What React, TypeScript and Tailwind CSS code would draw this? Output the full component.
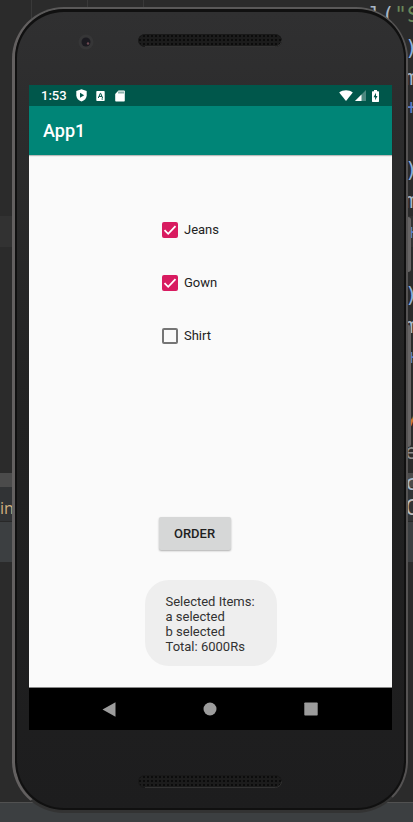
import React, { useState } from "react";

const codeRows = [
  { text: ")", height: "h-[30px]", color: "text-[#8fb0dc]" },
  { text: "m", height: "h-[29px]", color: "text-[#a9b7c6]" },
  { text: "+", height: "h-[63px]", color: "text-[#5a7fc8]" },
  { text: ")", height: "h-[31px]", color: "text-[#8fb0dc]" },
  { text: "m", height: "h-[31px]", color: "text-[#a9b7c6]" },
  { text: "+", height: "h-[63px]", color: "text-[#5a7fc8]" },
  { text: ")", height: "h-[31px]", color: "text-[#8fb0dc]" },
  { text: "m", height: "h-[31px]", color: "text-[#a9b7c6]" },
  { text: "+", height: "h-[59px]", color: "text-[#5a7fc8]" },
  { text: "y", height: "h-[36px]", color: "text-[#cc7832]" },
  { text: "e", height: "h-[31px]", color: "text-[#8c8c8c]" },
  { text: "c", height: "h-[25px]", color: "text-[#a9b7c6]" },
  { text: "C", height: "h-[24px]", color: "text-[#bbbbbb]" },
];

const Editor = () => {
  return (
    <div className="absolute inset-0 -z-10 flex flex-col overflow-hidden bg-[#2b2b2b]">
      {/* PANES */}
      <div className="h-[216px] shrink-0 flex">
        <div className="w-8 h-5 border-r border-[#393939]"></div>
        <div className="w-14 h-2 border-r border-[#393939]"></div>
        <div className="w-14 h-2 border-r border-[#393939]"></div>
      </div>
      <div className="h-[31px] shrink-0 bg-[#323232]"></div>
      <div className="h-[226px] shrink-0"></div>
      <div className="h-[14px] shrink-0 bg-[#4b4b4b]"></div>
      <div className="h-[35px] shrink-0 flex items-center pt-2 bg-[#313335] border-b border-[#282828]">
        <span className="font-['Open_Sans',sans-serif] text-base leading-5 text-[#d0b080]">
          in
        </span>
      </div>
      <div className="h-10 shrink-0 bg-[#3c3f41]"></div>
      <div className="flex-1"></div>
      <div className="h-5 shrink-0 bg-[#3c3f41] border-t border-[#515151]"></div>

      {/* CODE */}
      <div className="absolute top-0 right-0 w-[60px] pt-[3px] font-['DejaVu_Sans_Mono',monospace] text-[21px] leading-6">
        <p className="flex h-[33px] pl-4 whitespace-pre text-[#a9b7c6]">
          l(<span className="text-[#6a8759]">"S</span>
        </p>
        {codeRows.map((row, i) => (
          <p key={i} className={`flex pl-[52px] ${row.height} ${row.color}`}>
            {row.text}
          </p>
        ))}
      </div>
    </div>
  );
};

const Speaker = () => {
  return (
    <svg width="144" height="13" viewBox="0 0 144 13" aria-hidden="true">
      <defs>
        <pattern id="mesh" width="4" height="4" patternUnits="userSpaceOnUse">
          <rect width="4" height="4" fill="#1c1c1c" />
          <circle cx="2" cy="2" r="1" fill="#060606" />
        </pattern>
      </defs>
      <rect x="0.5" y="0.5" width="143" height="12" rx="6" fill="url(#mesh)" stroke="#191919" />
      <path d="M7 12.5h130.500a6 6 0 0 0 6-6" fill="none" stroke="#333333" />
    </svg>
  );
};

const StatusBar = () => {
  return (
    <div className="h-[21px] flex items-center justify-between pl-3 pr-[13px] bg-[#00574b] text-white">
      <div className="flex items-center">
        <span className="w-[35px] text-[13px] leading-5 font-medium">1:53</span>
        <svg width="11" height="13" viewBox="0 0 11 13" aria-hidden="true">
          <path d="M5.500 0.300L10.700 2v4.300c0 3-2.200 5.300-5.200 6.300C2.500 11.600.3 9.300.3 6.300V2z" fill="#fff" />
          <path d="M4 3.800l4.200 2.500L4 8.800z" fill="#00574b" />
        </svg>
        <svg className="ml-[9px]" width="9" height="10" viewBox="0 0 9 10" aria-hidden="true">
          <rect x="0.300" width="8.400" height="10" rx="0.800" fill="#fff" />
          <path d="M2.300 7L4.300 2.300h.4L6.600 7M3 5.400h3M5.500 8h1.500" fill="none" stroke="#00574b" />
        </svg>
        <svg className="ml-[10px]" width="10" height="12" viewBox="0 0 10 12" aria-hidden="true">
          <path d="M3.500.5H9q.8 0 .8.800v9.400q0 .8-.8.800H1q-.8 0-.8-.8V4z" fill="#fff" />
          <path d="M4 1.500v2M6 1.500v2M8 1.500v2" stroke="#00574b" strokeWidth="0.900" />
        </svg>
      </div>
      <div className="flex items-center">
        <svg width="14" height="11" viewBox="0 0 14 11" aria-hidden="true">
          <path d="M7 11L.2 2.500C4-.6 10-.6 13.800 2.500z" fill="#fff" />
        </svg>
        <svg className="ml-[2px]" width="11" height="11" viewBox="0 0 11 11" aria-hidden="true">
          <path d="M0 11L11 0v11z" fill="#fff" opacity="0.300" />
          <path d="M0 11L6.500 4.500V11z" fill="#fff" />
        </svg>
        <svg className="ml-[6px]" width="7" height="12" viewBox="0 0 7 12" aria-hidden="true">
          <path d="M2 0h3v1.300h1.400q.6 0 .6.700v9.300q0 .7-.6.700H.6q-.6 0-.6-.7V2q0-.7.600-.7H2z" fill="#fff" />
          <path d="M4 2.700v3.200h1.500L3.100 10.300V7.200H1.500z" fill="#00574b" />
        </svg>
      </div>
    </div>
  );
};

type ItemProps = {
  name: string;
  checked: boolean;
  onChange: () => void;
};

const Item = ({ name, checked, onChange }: ItemProps) => {
  return (
    <label className="h-[53px] flex items-center gap-[6px] text-[13px] leading-4 text-[#222222] cursor-pointer">
      <span className="grid">
        <input
          type="checkbox"
          checked={checked}
          onChange={onChange}
          className="peer col-start-1 row-start-1 appearance-none w-4 h-4 rounded-[2px] border-2 border-[#757575] checked:border-[#d81b60] checked:bg-[#d81b60]"
        />
        <svg
          className="col-start-1 row-start-1 pointer-events-none invisible peer-checked:visible"
          width="16"
          height="16"
          viewBox="0 0 16 16"
          aria-hidden="true"
        >
          <path d="M2.500 8.200l3.700 3.600 7.300-7.600" fill="none" stroke="#fff" strokeWidth="1.800" />
        </svg>
      </span>
      {name}
    </label>
  );
};

const App = () => {
  const [items, setItems] = useState([
    { name: "Jeans", checked: true },
    { name: "Gown", checked: true },
    { name: "Shirt", checked: false },
  ]);

  const toggle = (name: string) => {
    setItems((prev) =>
      prev.map((item) =>
        item.name === name ? { ...item, checked: !item.checked } : item
      )
    );
  };

  return (
    <div className="relative isolate min-h-screen flex pt-[7px] pb-[9px] pl-3 pr-[2px] font-[Roboto,sans-serif]">
      <Editor />

      {/* PHONE */}
      <div className="flex-1 flex rounded-[52px] border-t-2 border-r-2 border-b-2 border-l-3 border-t-[#5a5959] border-r-[#555353] border-b-[#333333] border-l-[#636060] bg-[#333333] pb-px">
        <div className="flex-1 flex flex-col items-stretch rounded-[49px] border-2 border-t-3 border-[#101010] bg-linear-to-b from-[#303031] via-[#222222] to-[#1d1d1e] pl-3 pr-3">
          <div className="h-[73px] grid grid-cols-[1fr_auto_1fr] pt-[22px] pr-[2px] items-start">
            <svg className="ml-[49px]" width="16" height="16" viewBox="0 0 16 16" aria-hidden="true">
              <circle cx="8" cy="8" r="7.500" fill="#363637" />
              <circle cx="8" cy="8" r="4.500" fill="#1b1a20" />
              <circle cx="10" cy="9.500" r="1.200" fill="#6e4a52" />
            </svg>
            <Speaker />
          </div>

          {/* SCREEN */}
          <div className="flex-1 flex flex-col bg-[#fafafa]">
            <StatusBar />
            <header className="h-[49px] flex items-center px-[14px] bg-[#008577] text-white shadow-[0_1px_1px_rgba(0,0,0,0.25)]">
              <h1 className="text-[18px] leading-6 font-medium">App1</h1>
            </header>

            <main className="flex-1 flex flex-col items-center pt-12">
              <div className="flex flex-col pr-10">
                {items.map((item) => (
                  <Item
                    key={item.name}
                    name={item.name}
                    checked={item.checked}
                    onChange={() => toggle(item.name)}
                  />
                ))}
              </div>
              <div className="flex-1"></div>
              <div className="pr-8">
                <button className="w-[72px] h-[33px] rounded-[2px] bg-[#d6d7d7] text-[13px] leading-4 font-medium text-[#1f1f1f] shadow-[0_1px_2px_rgba(0,0,0,0.3)] cursor-pointer">
                  ORDER
                </button>
              </div>
              <div
                role="status"
                className="mt-[30px] mb-[21px] w-[132px] rounded-[24px] bg-[#eeeeee] pl-[21px] pt-[14px] pb-3 text-[13px] leading-[15px] text-[#323232]"
              >
                <p>Selected Items:</p>
                <p>a selected</p>
                <p>b selected</p>
                <p>Total: 6000Rs</p>
              </div>
            </main>

            {/* NAVIGATION */}
            <nav className="h-[43px] flex items-center justify-center gap-[87px] pr-[2px] bg-black border-t border-[#888888]">
              <button aria-label="Back">
                <svg width="14" height="15" viewBox="0 0 14 15">
                  <path d="M0.500 7.500L13.500.3v14.400z" fill="#9c9c9c" />
                </svg>
              </button>
              <button aria-label="Home">
                <svg width="14" height="14" viewBox="0 0 14 14">
                  <circle cx="7" cy="7" r="6.500" fill="#9c9c9c" />
                </svg>
              </button>
              <button aria-label="Overview">
                <svg width="14" height="14" viewBox="0 0 14 14">
                  <rect x="0.300" y="0.500" width="13.400" height="13" rx="0.800" fill="#9c9c9c" />
                </svg>
              </button>
            </nav>
          </div>

          <div className="h-[78px] flex justify-center items-start pt-[45px] pr-[2px]">
            <Speaker />
          </div>
        </div>
      </div>

      {/* SIDE BUTTONS */}
      <div className="w-[3px] flex flex-col pt-[210px]">
        <div className="h-[55px] w-[3px] rounded-r-sm bg-[#666464]"></div>
        <div className="mt-[53px] h-[122px] w-[3px] rounded-r-sm bg-[#666464]"></div>
      </div>
    </div>
  );
};

export default App;
